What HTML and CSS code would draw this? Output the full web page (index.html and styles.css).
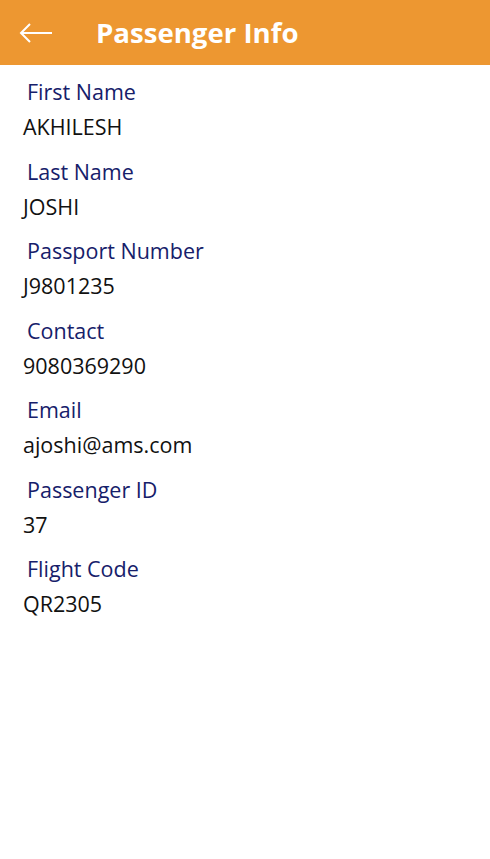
FILE: index.html
```html
<!DOCTYPE html>
<html>
<head>
<meta charset="utf-8">
<link rel="stylesheet" href="styles.css">
</head>
<body>
<header class="bar">
  <svg class="back" width="34" height="20" viewBox="0 0 34 20">
    <path d="M33 10H2M11 1L2 10l9 9" fill="none" stroke="#fff" stroke-width="2"/>
  </svg>
  <h1 class="title">Passenger Info</h1>
</header>
<main class="list">
  <div class="field"><div class="label">First Name</div><div class="value">AKHILESH</div></div>
  <div class="field"><div class="label">Last Name</div><div class="value">JOSHI</div></div>
  <div class="field"><div class="label">Passport Number</div><div class="value">J9801235</div></div>
  <div class="field"><div class="label">Contact</div><div class="value">9080369290</div></div>
  <div class="field"><div class="label">Email</div><div class="value">ajoshi@ams.com</div></div>
  <div class="field"><div class="label">Passenger ID</div><div class="value">37</div></div>
  <div class="field"><div class="label">Flight Code</div><div class="value">QR2305</div></div>
</main>
</body>
</html>
```
FILE: styles.css
```css
html, body { margin: 0; padding: 0; background: #fff; }
body { font-family: "Open Sans", "Noto Sans", sans-serif; width: 490px; height: 859px; overflow: hidden; }
.bar { height: 65px; background: #ED9731; display: flex; align-items: center; }
.back { margin-left: 19px; display: block; }
.title { margin: 0 0 0 43px; color: #fff; font-size: 27.6px; font-weight: 700; line-height: 1; }
.list { padding-top: 13px; }
.field { height: 79.5px; }
.label { color: #16206a; font-size: 21.5px; line-height: 28px; padding-left: 27px; }
.value { color: #111; font-size: 21.5px; line-height: 28px; padding-left: 23px; margin-top: 7px; }
```
